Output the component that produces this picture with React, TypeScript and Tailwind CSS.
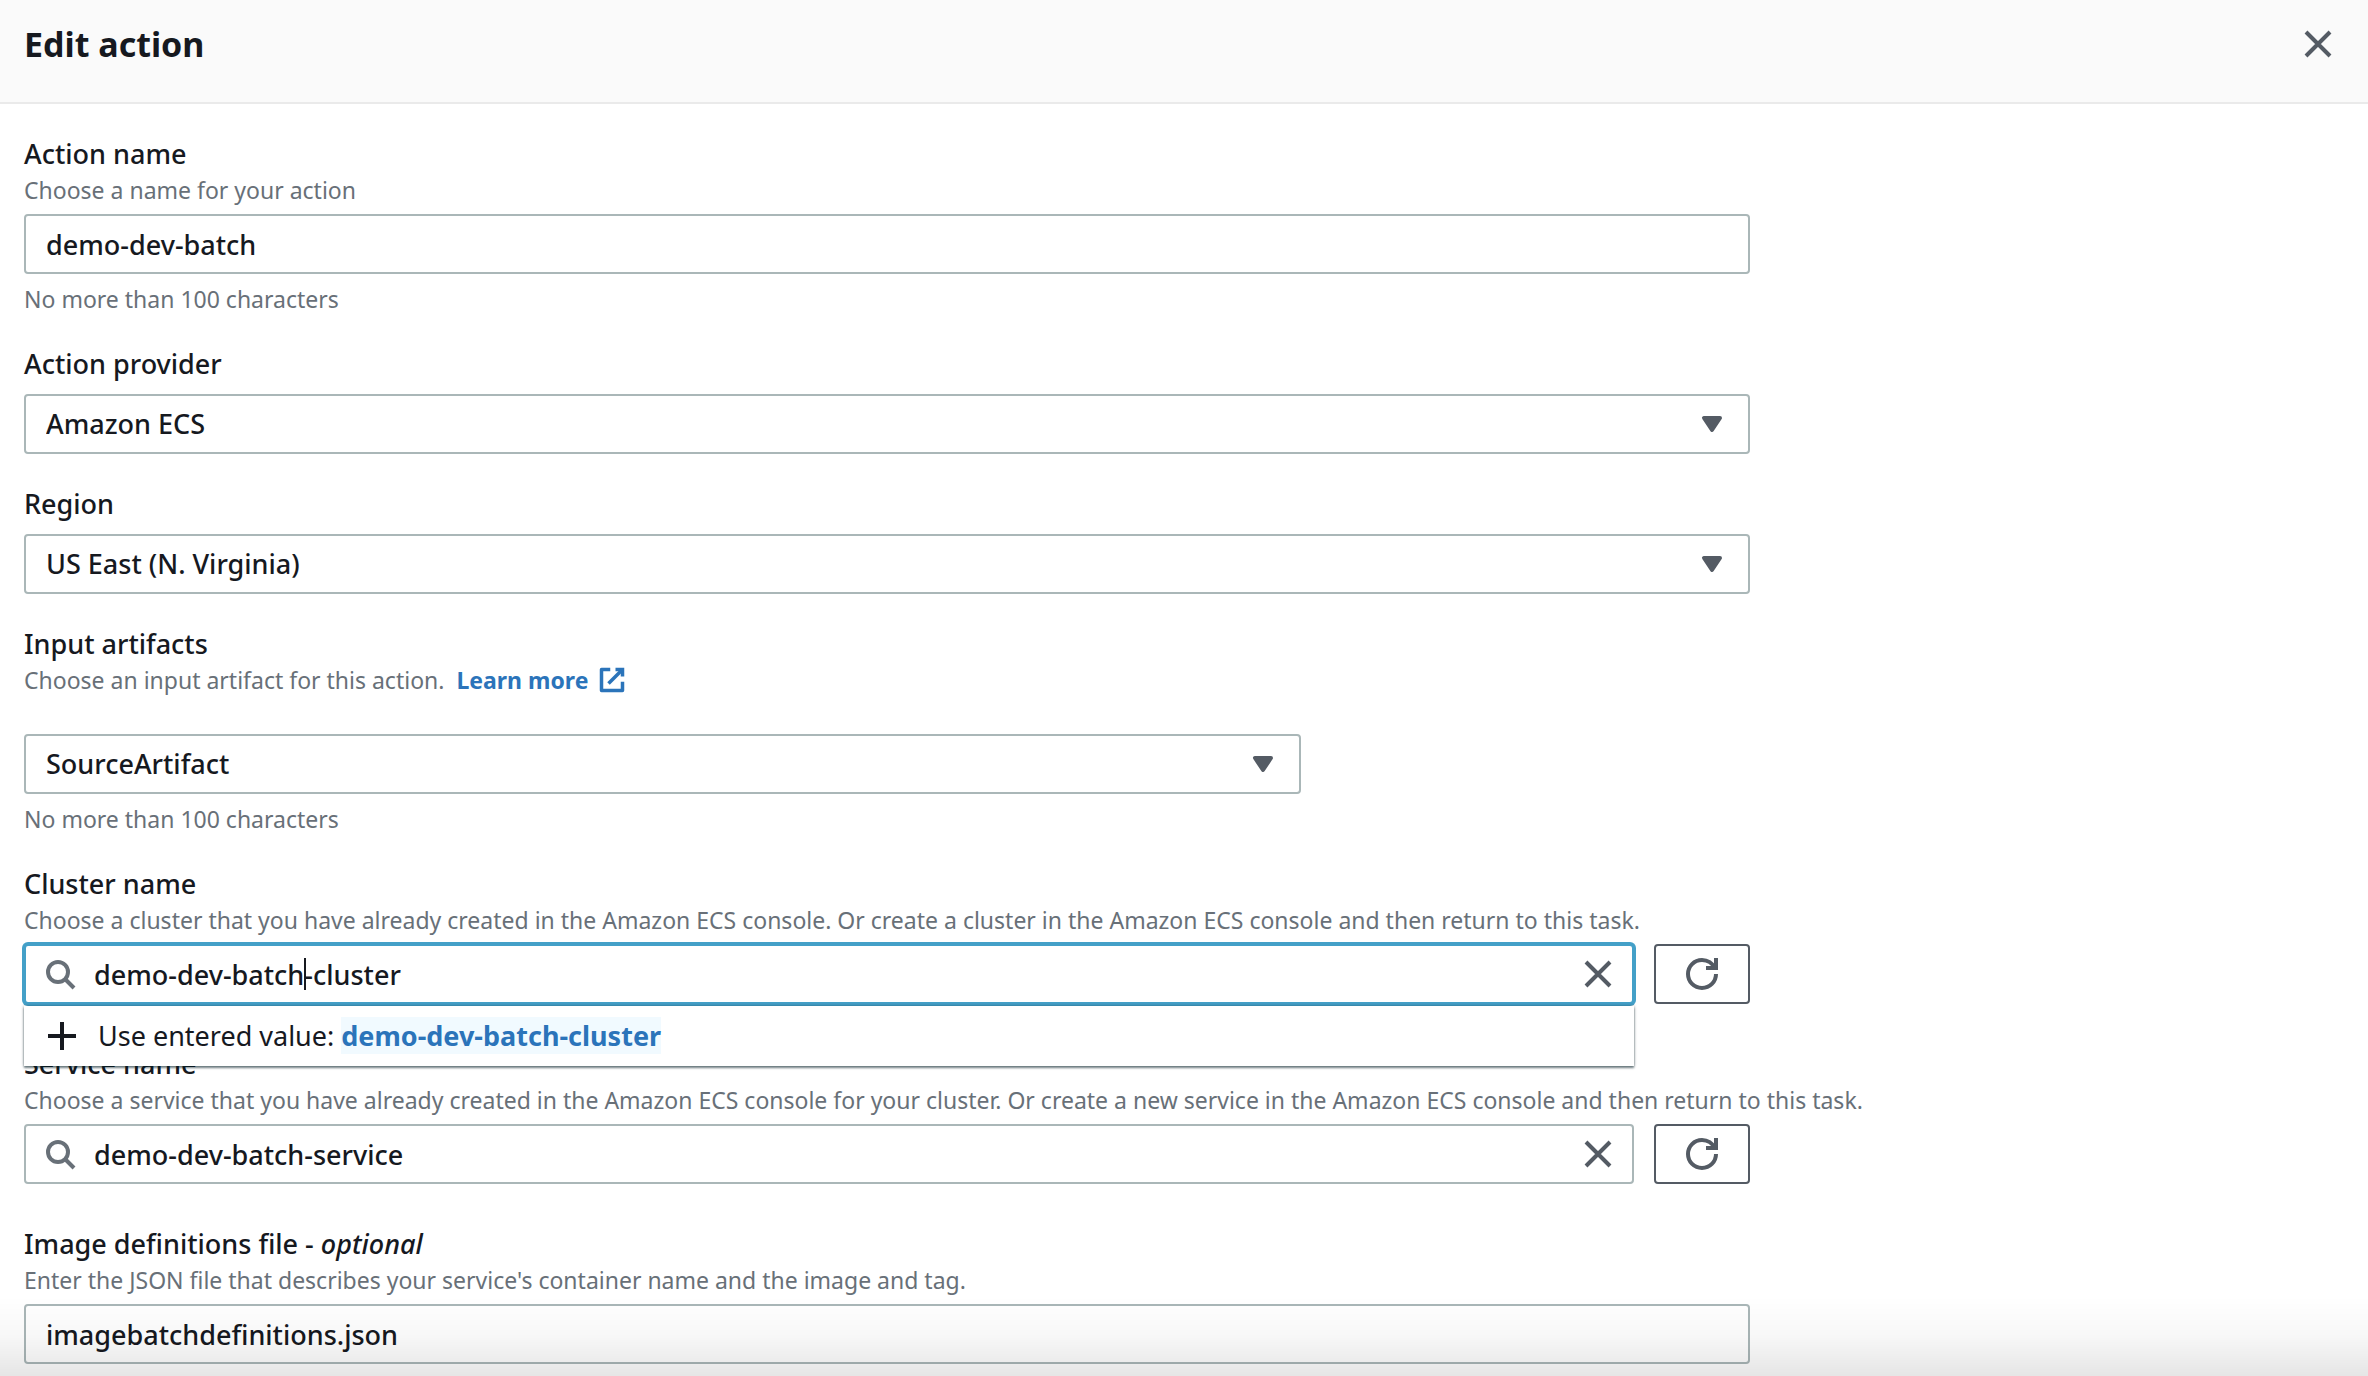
import React, { useState } from "react";

const CONTROL = "block h-[60px] w-full rounded-sm border-2 bg-white text-[27px] font-medium text-[#16191f] outline-none";

function CloseIcon() {
  return (
    <svg viewBox="0 0 16 16" className="h-8 w-8 fill-none stroke-[#545b64] stroke-2" aria-hidden="true">
      <path d="M2 2l12 12M14 2L2 14" />
    </svg>
  );
}

function SearchIcon() {
  return (
    <svg viewBox="0 0 16 16" className="h-8 w-8 fill-none stroke-[#687078] stroke-2" aria-hidden="true">
      <circle cx="7" cy="7" r="5" />
      <path d="M15 15l-4.5-4.5" />
    </svg>
  );
}

function RefreshIcon() {
  return (
    <svg viewBox="0 0 16 16" className="h-8 w-8 fill-none stroke-[#545b64] stroke-2" aria-hidden="true">
      <path d="M15 8c0 3.9-3.1 7-7 7s-7-3.1-7-7 3.1-7 7-7c2.8 0 5.3 1.7 6.4 4.1" />
      <path d="M10 5h5V0" />
    </svg>
  );
}

function ExternalIcon() {
  return (
    <svg viewBox="0 0 16 16" className="h-7 w-7 fill-none stroke-[#2b74ba] stroke-2" aria-hidden="true">
      <path d="M10 2h4v4" />
      <path d="M6 10l8-8" />
      <path d="M14 9v5H2V2h5" strokeLinejoin="round" />
    </svg>
  );
}

function Label({ htmlFor, children }: { htmlFor: string; children: React.ReactNode }) {
  return (
    <label htmlFor={htmlFor} className="block text-[27px] leading-10 font-medium text-[#16191f]">
      {children}
    </label>
  );
}

function Description({ children }: { children: React.ReactNode }) {
  return <p className="text-[23px] leading-8 whitespace-nowrap text-[#687078]">{children}</p>;
}

function Hint({ children }: { children: React.ReactNode }) {
  return <p className="mt-2.5 text-[23px] leading-[30px] text-[#687078]">{children}</p>;
}

function SelectBox({ id, options }: { id: string; options: string[] }) {
  return (
    <div className="relative">
      <select id={id} className={`${CONTROL} appearance-none border-[#aab7b8] px-5`}>
        {options.map((option) => (
          <option key={option}>{option}</option>
        ))}
      </select>
      <svg
        viewBox="0 0 16 16"
        className="pointer-events-none absolute top-3.5 right-5.5 h-8 w-8 fill-[#545b64] stroke-[#545b64] stroke-2"
        strokeLinejoin="round"
        aria-hidden="true"
      >
        <path d="M4 5h8l-4 6-4-6z" />
      </svg>
    </div>
  );
}

interface SearchBoxProps {
  id: string;
  initial: string;
  refreshLabel: string;
  open?: boolean;
}

function SearchBox({ id, initial, refreshLabel, open = false }: SearchBoxProps) {
  const [value, setValue] = useState(initial);

  return (
    <div className="flex gap-5">
      <div className="relative flex-1">
        <input
          id={id}
          type="text"
          value={value}
          onChange={(e) => setValue(e.target.value)}
          className={`${CONTROL} pr-16 pl-[68px] ${
            open ? "border-[#44a0c8] ring-2 ring-[#44a0c8]" : "border-[#aab7b8]"
          }`}
        />
        <span className="pointer-events-none absolute top-3.5 left-5">
          <SearchIcon />
        </span>
        <button type="button" aria-label="Clear" onClick={() => setValue("")} className="absolute top-3.5 right-5">
          <CloseIcon />
        </button>

        {/* Text cursor and suggestion list */}
        {open && (
          <>
            <span className="absolute top-3.5 left-[280px] h-8 w-0.5 bg-[#16191f]" />
            <div className="absolute top-[62px] right-0 left-0 z-10 flex h-[60px] items-center gap-5.5 bg-white px-6 text-[27px] text-[#16191f] shadow-[0_2px_2px_0_rgba(0,28,36,0.5),0_0_3px_0_rgba(0,28,36,0.4)]">
              <svg viewBox="0 0 28 28" className="h-7 w-7 fill-none stroke-[#16191f] stroke-4" aria-hidden="true">
                <path d="M14 0v28M0 14h28" />
              </svg>
              <button type="button" className="leading-8">
                Use entered value: <span className="bg-[#f1faff] font-bold text-[#2b74ba]">{value}</span>
              </button>
            </div>
          </>
        )}
      </div>
      <button
        type="button"
        aria-label={refreshLabel}
        className="flex h-[60px] w-24 items-center justify-center rounded-sm border-2 border-[#545b64] bg-white"
      >
        <RefreshIcon />
      </button>
    </div>
  );
}

export default function App() {
  const [actionName, setActionName] = useState("demo-dev-batch");
  const [fileName, setFileName] = useState("imagebatchdefinitions.json");

  return (
    <div className="min-h-screen bg-white font-['Noto_Sans',sans-serif]">
      <header className="flex items-start justify-between border-b-2 border-[#eaeaea] bg-[#fafafa] px-6 pt-5 pb-[34px]">
        <h1 className="text-[34px] leading-[48px] font-bold text-[#16191f]">Edit action</h1>
        <button type="button" aria-label="Close" className="mt-2 mr-2.5">
          <CloseIcon />
        </button>
      </header>

      <form className="flex flex-col gap-7.5 px-6 pt-7.5 pb-2.5">
        <div>
          <Label htmlFor="action-name">Action name</Label>
          <Description>Choose a name for your action</Description>
          <div className="mt-2 w-3/4 pr-3.5">
            <input
              id="action-name"
              type="text"
              value={actionName}
              onChange={(e) => setActionName(e.target.value)}
              className={`${CONTROL} border-[#aab7b8] px-5`}
            />
          </div>
          <Hint>No more than 100 characters</Hint>
        </div>

        <div>
          <Label htmlFor="action-provider">Action provider</Label>
          <div className="mt-2.5 w-3/4 pr-3.5">
            <SelectBox id="action-provider" options={["Amazon ECS"]} />
          </div>
        </div>

        <div>
          <Label htmlFor="region">Region</Label>
          <div className="mt-2.5 w-3/4 pr-3.5">
            <SelectBox id="region" options={["US East (N. Virginia)"]} />
          </div>
        </div>

        <div>
          <Label htmlFor="input-artifacts">Input artifacts</Label>
          <div className="flex items-center gap-3">
            <Description>Choose an input artifact for this action.</Description>
            <a href="#learn-more" className="flex items-center gap-2.5 text-[23px] leading-8 font-bold text-[#2b74ba]">
              Learn more
              <ExternalIcon />
            </a>
          </div>
          <div className="mt-[38px] w-3/4 pr-3.5">
            <div className="w-3/4 pr-4.5">
              <SelectBox id="input-artifacts" options={["SourceArtifact"]} />
            </div>
          </div>
          <Hint>No more than 100 characters</Hint>
        </div>

        <div className="pb-2.5">
          <Label htmlFor="cluster-name">Cluster name</Label>
          <Description>
            Choose a cluster that you have already created in the Amazon ECS console. Or create a cluster in the Amazon
            ECS console and then return to this task.
          </Description>
          <div className="mt-2 w-3/4 pr-3.5">
            <SearchBox id="cluster-name" initial="demo-dev-batch-cluster" refreshLabel="Refresh clusters" open />
          </div>
        </div>

        <div className="pb-2.5">
          <Label htmlFor="service-name">Service name</Label>
          <Description>
            Choose a service that you have already created in the Amazon ECS console for your cluster. Or create a new
            service in the Amazon ECS console and then return to this task.
          </Description>
          <div className="mt-2 w-3/4 pr-3.5">
            <SearchBox id="service-name" initial="demo-dev-batch-service" refreshLabel="Refresh services" />
          </div>
        </div>

        <div>
          <Label htmlFor="image-file">
            Image definitions file - <i>optional</i>
          </Label>
          <Description>Enter the JSON file that describes your service's container name and the image and tag.</Description>
          <div className="mt-2 w-3/4 pr-3.5">
            <input
              id="image-file"
              type="text"
              value={fileName}
              onChange={(e) => setFileName(e.target.value)}
              className={`${CONTROL} border-[#aab7b8] px-5`}
            />
          </div>
        </div>
      </form>

      {/* Scroll shade at the bottom edge */}
      <div className="pointer-events-none fixed inset-x-0 bottom-0 h-20 bg-linear-to-b from-transparent via-black/3 to-black/10" />
    </div>
  );
}
